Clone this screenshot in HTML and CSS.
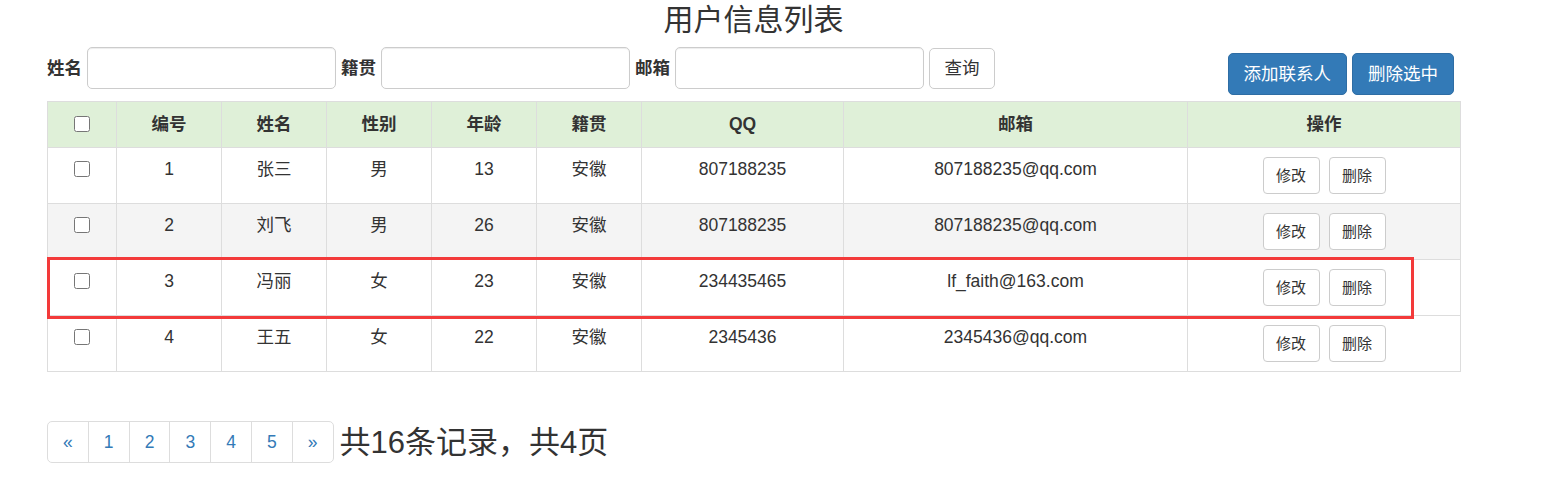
FILE: index.html
```html
<!DOCTYPE html>
<html lang="zh-CN">
<head>
<meta charset="utf-8">
<title>用户信息列表</title>
<link rel="stylesheet" href="styles.css">
</head>
<body>
<div class="container">
  <h3 class="title">用户信息列表</h3>

  <div class="toolbar">
    <form class="search">
      <label class="lbl">姓名</label>
      <input class="field" type="text">
      <label class="lbl">籍贯</label>
      <input class="field" type="text">
      <label class="lbl">邮箱</label>
      <input class="field" type="text">
      <button type="button" class="btn btn-query">查询</button>
    </form>
    <div class="actions">
      <a class="btn btn-primary">添加联系人</a>
      <a class="btn btn-primary">删除选中</a>
    </div>
  </div>

  <div class="table-wrap">
    <table class="grid">
      <colgroup>
        <col class="c-chk"><col class="c-s"><col class="c-s"><col class="c-s"><col class="c-s"><col class="c-s"><col class="c-qq"><col class="c-mail"><col class="c-op">
      </colgroup>
      <thead>
        <tr>
          <th><input type="checkbox" class="chk"></th>
          <th>编号</th><th>姓名</th><th>性别</th><th>年龄</th><th>籍贯</th><th>QQ</th><th>邮箱</th><th>操作</th>
        </tr>
      </thead>
      <tbody>
        <tr>
          <td><input type="checkbox" class="chk"></td>
          <td>1</td><td>张三</td><td>男</td><td>13</td><td>安徽</td><td>807188235</td><td>807188235@qq.com</td>
          <td><div class="ops"><a class="btn btn-sm">修改</a><a class="btn btn-sm">删除</a></div></td>
        </tr>
        <tr class="alt">
          <td><input type="checkbox" class="chk"></td>
          <td>2</td><td>刘飞</td><td>男</td><td>26</td><td>安徽</td><td>807188235</td><td>807188235@qq.com</td>
          <td><div class="ops"><a class="btn btn-sm">修改</a><a class="btn btn-sm">删除</a></div></td>
        </tr>
        <tr>
          <td><input type="checkbox" class="chk"></td>
          <td>3</td><td>冯丽</td><td>女</td><td>23</td><td>安徽</td><td>234435465</td><td>lf_faith@163.com</td>
          <td><div class="ops"><a class="btn btn-sm">修改</a><a class="btn btn-sm">删除</a></div></td>
        </tr>
        <tr>
          <td><input type="checkbox" class="chk"></td>
          <td>4</td><td>王五</td><td>女</td><td>22</td><td>安徽</td><td>2345436</td><td>2345436@qq.com</td>
          <td><div class="ops"><a class="btn btn-sm">修改</a><a class="btn btn-sm">删除</a></div></td>
        </tr>
      </tbody>
    </table>
    <div class="highlight"></div>
  </div>

  <div class="pager-row">
    <ul class="pagination">
      <li><a>&laquo;</a></li>
      <li><a>1</a></li>
      <li><a>2</a></li>
      <li><a>3</a></li>
      <li><a>4</a></li>
      <li><a>5</a></li>
      <li><a>&raquo;</a></li>
    </ul>
    <span class="summary">共16条记录，共4页</span>
  </div>
</div>
</body>
</html>
```

FILE: styles.css
```css
* { box-sizing: border-box; }

body {
  margin: 0;
  background: #fff;
  color: #333;
  font-family: "Liberation Sans", "Noto Sans CJK SC", sans-serif;
  font-size: 17.5px;
  line-height: 25px;
}

.container {
  width: 1413px;
  margin: 0 0 0 47px;
}

.title {
  margin: 0;
  padding-top: 3px;
  font-size: 30px;
  line-height: 33px;
  font-weight: 400;
  text-align: center;
  color: #333;
}

.toolbar {
  margin-top: 11px;
  display: flex;
  justify-content: space-between;
  align-items: flex-start;
}

.search {
  display: flex;
  align-items: center;
  height: 42px;
  margin: 0;
}

.lbl {
  font-weight: 700;
  margin-right: 5px;
}

.field {
  width: 249px;
  height: 42px;
  border: 1px solid #ccc;
  border-radius: 5px;
  box-shadow: inset 0 1px 1px rgba(0,0,0,.075);
  margin: 0 5px 0 0;
  padding: 0 15px;
  font-size: 17.5px;
}

.btn {
  display: inline-flex;
  align-items: center;
  justify-content: center;
  border: 1px solid #ccc;
  border-radius: 5px;
  background: #fff;
  color: #333;
  font-family: inherit;
  font-size: 17.5px;
  line-height: 25px;
  padding: 0 15px;
  cursor: pointer;
  white-space: nowrap;
}

.btn-query {
  height: 41px;
  width: 66px;
  padding: 0;
}

.actions {
  display: flex;
  gap: 5px;
  margin-top: 6px;
  margin-right: 6px;
}

.btn-primary {
  height: 42px;
  background: #337ab7;
  border-color: #2e6da4;
  color: #fff;
}

.table-wrap {
  position: relative;
  margin-top: 6px;
}

.grid {
  width: 1413px;
  table-layout: fixed;
  border-collapse: collapse;
  border: 1px solid #ddd;
}

.c-chk { width: 69px; }
.c-s { width: 105px; }
.c-qq { width: 202px; }
.c-mail { width: 344px; }
.c-op { width: 273px; }

.grid th,
.grid td {
  border: 1px solid #ddd;
  text-align: center;
  vertical-align: top;
  line-height: 25px;
}

.grid th {
  background: #dff0d8;
  font-weight: 700;
  padding: 10px 8px;
}

.grid td {
  padding: 9px 8px;
}

.grid tr.alt td { background: #f4f4f4; }

.chk {
  display: block;
  width: 16px;
  height: 16px;
  margin: 4px auto 0;
}

.ops {
  display: flex;
  justify-content: center;
  gap: 9px;
  height: 37px;
}

.btn-sm {
  width: 57px;
  height: 37px;
  padding: 0;
  font-size: 15px;
  border-radius: 4px;
}

.highlight {
  position: absolute;
  left: 0;
  top: 156px;
  width: 1367px;
  height: 62px;
  border: 3px solid #f33a3a;
  pointer-events: none;
}

.pager-row {
  margin-top: 49px;
  display: flex;
  align-items: center;
  gap: 6px;
}

.pagination {
  display: flex;
  list-style: none;
  margin: 0;
  padding: 0;
}

.pagination li a {
  display: flex;
  align-items: center;
  justify-content: center;
  width: 41.8px;
  height: 42px;
  margin-left: -1px;
  border: 1px solid #ddd;
  color: #337ab7;
  font-size: 17.5px;
  background: #fff;
}

.pagination li:first-child a {
  margin-left: 0;
  border-radius: 5px 0 0 5px;
}

.pagination li:last-child a {
  border-radius: 0 5px 5px 0;
}

.summary {
  font-size: 31px;
  line-height: 33px;
  color: #333;
}
```
